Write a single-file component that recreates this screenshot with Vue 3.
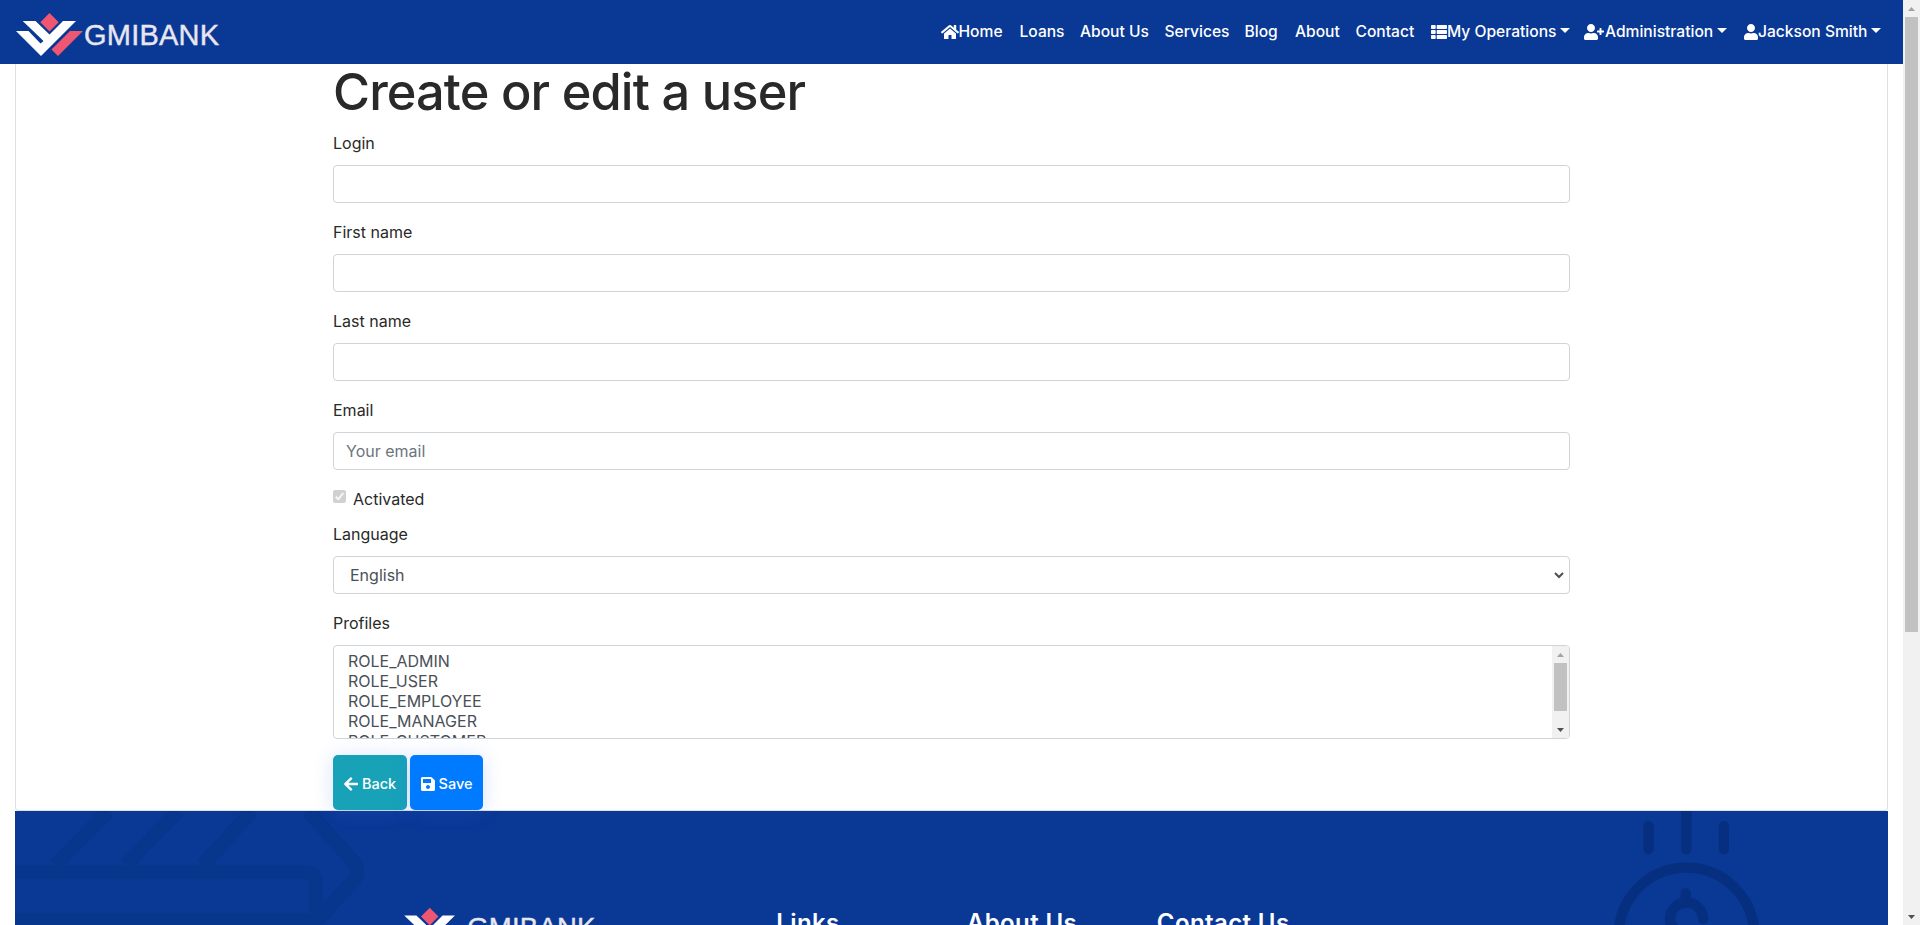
<script setup>
const links = [
  { label: 'Home', icon: 'home' },
  { label: 'Loans' },
  { label: 'About Us' },
  { label: 'Services' },
  { label: 'Blog' },
  { label: 'About' },
  { label: 'Contact' },
  { label: 'My Operations', icon: 'list', menu: true },
  { label: 'Administration', icon: 'userplus', menu: true },
  { label: 'Jackson Smith', icon: 'user', menu: true },
]
const icons = {
  home: { w: 576, d: 'M280.37 148.26L96 300.11V464a16 16 0 0 0 16 16l112.06-.29a16 16 0 0 0 15.92-16V368a16 16 0 0 1 16-16h64a16 16 0 0 1 16 16v95.64a16 16 0 0 0 16 16.05L464 480a16 16 0 0 0 16-16V300L295.67 148.26a12.19 12.19 0 0 0-15.3 0zM571.6 251.47L488 182.56V44.05a12 12 0 0 0-12-12h-56a12 12 0 0 0-12 12v72.61L318.47 43a48 48 0 0 0-61 0L4.34 251.47a12 12 0 0 0-1.6 16.9l25.5 31A12 12 0 0 0 45.15 301l235.22-193.74a12.19 12.19 0 0 1 15.3 0L530.9 301a12 12 0 0 0 16.9-1.6l25.5-31a12 12 0 0 0-1.7-16.93z' },
  list: { w: 512, d: 'M149.333 216v80c0 13.255-10.745 24-24 24H24c-13.255 0-24-10.745-24-24v-80c0-13.255 10.745-24 24-24h101.333c13.255 0 24 10.745 24 24zM0 376v80c0 13.255 10.745 24 24 24h101.333c13.255 0 24-10.745 24-24v-80c0-13.255-10.745-24-24-24H24c-13.255 0-24 10.745-24 24zM125.333 32H24C10.745 32 0 42.745 0 56v80c0 13.255 10.745 24 24 24h101.333c13.255 0 24-10.745 24-24V56c0-13.255-10.745-24-24-24zm80 448H488c13.255 0 24-10.745 24-24v-80c0-13.255-10.745-24-24-24H205.333c-13.255 0-24 10.745-24 24v80c0 13.255 10.745 24 24 24zm-24-424v80c0 13.255 10.745 24 24 24H488c13.255 0 24-10.745 24-24V56c0-13.255-10.745-24-24-24H205.333c-13.255 0-24 10.745-24 24zm24 264H488c13.255 0 24-10.745 24-24v-80c0-13.255-10.745-24-24-24H205.333c-13.255 0-24 10.745-24 24v80c0 13.255 10.745 24 24 24z' },
  userplus: { w: 640, d: 'M624 208h-64v-64c0-8.800-7.200-16-16-16h-32c-8.800 0-16 7.200-16 16v64h-64c-8.800 0-16 7.200-16 16v32c0 8.800 7.200 16 16 16h64v64c0 8.800 7.200 16 16 16h32c8.800 0 16-7.200 16-16v-64h64c8.800 0 16-7.200 16-16v-32c0-8.800-7.200-16-16-16zm-400 48c70.700 0 128-57.300 128-128S294.700 0 224 0 96 57.300 96 128s57.300 128 128 128zm89.600 32h-16.700c-22.200 10.200-46.900 16-72.900 16s-50.600-5.800-72.900-16h-16.700C60.200 288 0 348.200 0 422.400V464c0 26.500 21.500 48 48 48h352c26.500 0 48-21.500 48-48v-41.600c0-74.200-60.200-134.400-134.400-134.400z' },
  user: { w: 448, d: 'M224 256c70.700 0 128-57.300 128-128S294.700 0 224 0 96 57.300 96 128s57.300 128 128 128zm89.600 32h-16.700c-22.200 10.200-46.900 16-72.900 16s-50.600-5.800-72.900-16h-16.700C60.200 288 0 348.200 0 422.400V464c0 26.500 21.500 48 48 48h352c26.500 0 48-21.500 48-48v-41.600c0-74.200-60.200-134.400-134.400-134.400z' },
}
const fields = [
  { label: 'Login', hint: '' },
  { label: 'First name', hint: '' },
  { label: 'Last name', hint: '' },
  { label: 'Email', hint: 'Your email' },
]
const roles = ['ROLE_ADMIN', 'ROLE_USER', 'ROLE_EMPLOYEE', 'ROLE_MANAGER', 'ROLE_CUSTOMER']
</script>

<template>
  <div class="page">
    <div class="content">
      <header class="nav">
        <svg class="logo" width="210" height="50" viewBox="14 10 210 50">
          <path fill="#ef5672" d="M49.500 13l9.200 9.200-9.200 9.200-9.200-9.200zM70 31h13L58 56l-6.500-6.500z" />
          <path fill="#fff" d="M22.700 21H35.500L49.500 34.500 63 21H76L41 56 16 31H28.500L40.500 43.500 43.500 41z" />
          <text x="84" y="45.300" font-size="29" textLength="135" fill="#e9e6ee" stroke="#e9e6ee" stroke-width=".4">GMIBANK</text>
        </svg>
        <nav class="links">
          <a v-for="l in links" :key="l.label" class="link">
            <svg v-if="l.icon" class="fa" :class="l.icon" :viewBox="`0 0 ${icons[l.icon].w} 512`"><path fill="currentColor" :d="icons[l.icon].d" /></svg>
            <span>{{ l.label }}</span>
            <i v-if="l.menu" class="caret"></i>
          </a>
        </nav>
      </header>

      <main class="card">
        <form class="form">
          <h1>Create or edit a user</h1>
          <div v-for="f in fields" :key="f.label" class="group">
            <label>{{ f.label }}</label>
            <input class="control" type="text" :placeholder="f.hint" />
          </div>
          <div class="check">
            <svg class="box" width="13" height="13" viewBox="0 0 13 13"><rect width="13" height="13" rx="2" fill="#d1d1d1" /><path d="M2.800 6.800l2.500 2.500 5-6.300" fill="none" stroke="#f6f6f6" stroke-width="2" /></svg>
            <span>Activated</span>
          </div>
          <div class="group">
            <label>Language</label>
            <div class="control select">
              <span>English</span>
              <svg width="10" height="7" viewBox="0 0 10 7"><path d="M1 1l4 4 4-4" fill="none" stroke="#495057" stroke-width="2" /></svg>
            </div>
          </div>
          <div class="profiles">
            <label>Profiles</label>
            <div class="control list">
              <ul><li v-for="r in roles" :key="r">{{ r }}</li></ul>
              <div class="bar">
                <svg class="arrow" viewBox="0 0 17 17"><path d="M5 11h7L8.500 7z" fill="#a3a3a3" /></svg>
                <div class="thumb"></div>
                <svg class="arrow end" viewBox="0 0 17 17"><path d="M5 7h7L8.500 11z" fill="#505050" /></svg>
              </div>
            </div>
          </div>
          <div class="buttons">
            <button type="button" class="btn back">
              <svg width="14" height="16" viewBox="0 0 448 512"><path fill="#fff" d="M257.500 445.100l-22.200 22.200c-9.400 9.400-24.600 9.400-33.900 0L7 273c-9.400-9.400-9.400-24.600 0-33.900L201.400 44.700c9.400-9.400 24.600-9.400 33.900 0l22.200 22.200c9.500 9.500 9.300 25-.4 34.300L136.600 216H424c13.300 0 24 10.700 24 24v32c0 13.300-10.700 24-24 24H136.600l120.500 114.800c9.800 9.300 10 24.800.4 34.300z" /></svg>
              <span>Back</span>
            </button>
            <button type="button" class="btn save">
              <svg width="14" height="16" viewBox="0 0 448 512"><path fill="#fff" d="M433.941 129.941l-83.882-83.882A48 48 0 0 0 316.118 32H48C21.490 32 0 53.490 0 80v352c0 26.510 21.490 48 48 48h352c26.510 0 48-21.490 48-48V163.882a48 48 0 0 0-14.059-33.941zM224 416c-35.346 0-64-28.654-64-64 0-35.346 28.654-64 64-64s64 28.654 64 64c0 35.346-28.654 64-64 64zm96-304.520V212c0 6.627-5.373 12-12 12H76c-6.627 0-12-5.373-12-12V108c0-6.627 5.373-12 12-12h228.520c3.183 0 6.235 1.264 8.485 3.515l3.480 3.480A11.996 11.996 0 0 1 320 111.480z" /></svg>
              <span>Save</span>
            </button>
          </div>
        </form>
      </main>

      <footer class="footer">
        <svg class="art" width="1873" height="114" viewBox="15 811 1873 114" fill="none">
          <g stroke="#07368d" stroke-width="14">
            <path d="M108 811L56 865M178 811L126 865M252 811L203 865M308 811L351 859Q363 870 352 882L316 922" />
            <path d="M15 872H303Q316 872 316 885V925M15 920H323" />
          </g>
          <g stroke="#062f80" stroke-width="10.300" stroke-linecap="round">
            <path d="M1648.500 826V849M1686.300 806V849M1723.800 826V849" />
            <circle cx="1686.500" cy="935.500" r="67.800" />
            <path d="M1685.800 893.500V901M1703 919A16.500 16.500 0 0 0 1670 919Q1670 926 1676 930" />
          </g>
        </svg>
        <div class="columns">
          <svg class="flogo" width="199.500" height="47.500" viewBox="14 10 210 50">
            <path fill="#ef5672" d="M49.500 13l9.200 9.200-9.200 9.200-9.200-9.200zM70 31h13L58 56l-6.500-6.500z" />
            <path fill="#fff" d="M22.700 21H35.500L49.500 34.500 63 21H76L41 56 16 31H28.500L40.500 43.500 43.500 41z" />
            <text x="89" y="44" font-size="29" textLength="135" fill="#e9e6ee" stroke="#e9e6ee" stroke-width=".4">GMIBANK</text>
          </svg>
          <h3>Links</h3>
          <h3>About Us</h3>
          <h3>Contact Us</h3>
        </div>
      </footer>
    </div>

    <aside class="bar pagebar">
      <svg class="arrow" viewBox="0 0 17 17"><path d="M5 11h7L8.500 7z" fill="#a3a3a3" /></svg>
      <div class="thumb"></div>
      <svg class="arrow end" viewBox="0 0 17 17"><path d="M5 7h7L8.500 11z" fill="#505050" /></svg>
    </aside>
  </div>
</template>

<style>
body { margin: 0; background: #fff; overflow: hidden; }
</style>

<style scoped>
* { box-sizing: border-box; }
.page { display: flex; width: 1920px; height: 925px; overflow: hidden; font-family: Inter, "Liberation Sans", sans-serif; font-size: 16px; color: #292929; }
.content { width: 1903px; height: 925px; overflow: hidden; display: flex; flex-direction: column; }
.nav { height: 64px; flex: none; background: #093895; display: flex; justify-content: space-between; padding: 10px 24px 0 14px; }
.logo, .flogo { font-family: "Liberation Sans", Arial, sans-serif; display: block; overflow: visible; }
.links { display: grid; grid-template-columns: 79px 60.500px 84.500px 80px 50.500px 60.500px 75.500px 153px 160px 135px; height: 44px; }
.link { display: flex; align-items: center; height: 43px; color: #fff; font-weight: 500; font-size: 15.600px; white-space: nowrap; }
.fa { height: 16px; flex: none; }
.home { width: 18px; }
.list.fa { width: 16px; }
.userplus { width: 20px; margin-right: 1px; }
.user { width: 14px; }
.caret { border: 5px solid transparent; border-top-color: #fff; border-bottom: 0; margin: 0 0 2px 4px; }
.card { margin: 0 15px; height: 747px; flex: none; border: 1px solid #dfdfdf; border-top: 0; border-radius: 0 0 4px 4px; position: relative; z-index: 1; background: #fff; }
.form { width: 1237px; margin-left: 317px; }
h1 { margin: 0; height: 66px; line-height: 56px; font-size: 50.500px; font-weight: 460; letter-spacing: -.9px; white-space: nowrap; }
.group { height: 89px; }
.profiles { height: 129px; }
label { display: block; height: 35px; line-height: 27px; }
.control { display: block; width: 1237px; height: 38px; border: 1px solid #ced4da; border-radius: 4px; background: #fff; padding: 0 12px 1px; font: inherit; color: #495057; }
.control::placeholder { color: #6c757d; opacity: 1; }
.check { display: flex; gap: 7px; height: 35px; line-height: 27px; }
.box { margin-top: 4px; }
.select { display: flex; align-items: center; justify-content: space-between; padding: 0 5px 0 16px; }
.control.list { height: 94px; display: flex; justify-content: space-between; padding: 0; overflow: hidden; }
ul { margin: 0; padding: 5px 0 0 14px; list-style: none; line-height: 20px; }
.bar { width: 17px; background: #f1f1f1; display: flex; flex-direction: column; flex: none; }
.arrow { width: 17px; height: 17px; flex: none; }
.end { margin-top: auto; }
.thumb { width: 13px; height: 48px; margin-left: 2px; background: #c1c1c1; }
.pagebar { height: 925px; }
.pagebar .thumb { height: 615px; }
.buttons { display: flex; gap: 3px; margin-top: 16px; }
.btn { height: 55px; border: 0; border-radius: 5px; color: #fff; font: 500 14.500px Inter, sans-serif; display: flex; align-items: center; justify-content: center; gap: 4px; padding: 2px 0 0; box-shadow: 0 2px 20px rgba(60, 110, 255, .2); }
.back { width: 74px; background: #17a2b8; }
.save { width: 73px; background: #007bff; }
.footer { margin: 0 15px; height: 114px; background: #093895; display: grid; }
.art { grid-area: 1 / 1; }
.columns { grid-area: 1 / 1; display: grid; grid-template-columns: 380.500px 190.500px 190px 300px; padding: 94px 0 0 380.800px; height: 114px; overflow: hidden; }
h3 { margin: 4px 0 0; font-size: 24px; line-height: 28px; font-weight: 600; letter-spacing: .4px; color: #fff; white-space: nowrap; }
</style>
